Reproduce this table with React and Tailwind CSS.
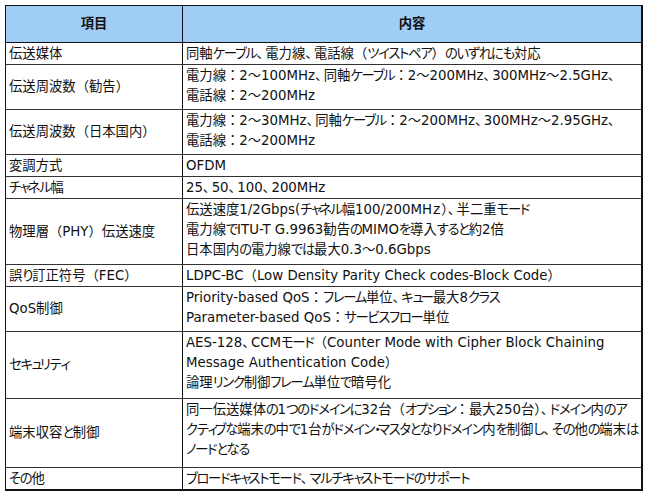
const rows = [
  { label: '伝送媒体', h: 'h-[21px]', lines: ['同軸ケーブル、電力線、電話線（ツイストペア）のいずれにも対応'] },
  { label: '伝送周波数（勧告）', h: 'h-[45px]', lines: ['電力線：2～100MHz、同軸ケーブル：2～200MHz、300MHz～2.5GHz、', '電話線：2～200MHz'] },
  { label: '伝送周波数（日本国内）', h: 'h-[45px]', lines: ['電力線：2～30MHz、同軸ケーブル：2～200MHz、300MHz～2.95GHz、', '電話線：2～200MHz'] },
  { label: '変調方式', h: 'h-[22px]', lines: ['OFDM'] },
  { label: 'チャネル幅', h: 'h-[22px]', lines: ['25、50、100、200MHz'] },
  { label: '物理層（PHY）伝送速度', h: 'h-[66px]', lines: ['伝送速度1/2Gbps(チャネル幅100/200MHｚ）、半二重モード', '電力線でITU-T G.9963勧告のMIMOを導入すると約2倍', '日本国内の電力線では最大0.3～0.6Gbps'] },
  { label: '誤り訂正符号（FEC）', h: 'h-[22px]', lines: ['LDPC-BC（Low Density Parity Check codes-Block Code）'] },
  { label: 'QoS制御', h: 'h-[45px]', lines: ['Priority-based QoS：フレーム単位、キュー最大8クラス', 'Parameter-based QoS：サービスフロー単位'] },
  { label: 'セキュリティ', h: 'h-[67px]', lines: ['AES-128、CCMモード（Counter Mode with Cipher Block Chaining', 'Message Authentication Code）', '論理リンク制御フレーム単位で暗号化'] },
  { label: '端末収容と制御', h: 'h-[69px]', lines: ['同一伝送媒体の1つのドメインに32台（オプション：最大250台）、ドメイン内のア', 'クティブな端末の中で1台がドメイン・マスタとなりドメイン内を制御し、その他の端末は', 'ノードとなる'] },
  { label: 'その他', h: 'h-[21px]', lines: ['ブロードキャストモード、マルチキャストモードのサポート'] },
];

// split into runs so kana / punctuation can get Meiryo UI–like widths
const runCls = {
  k: 'tracking-[-1.25px]',
  s: 'tracking-[-3px]',
  p: '[font-feature-settings:normal]',
  c: 'tracking-[2px]',
  n: '',
};

const kindOf = (ch) => {
  if (/[ぁぃぅぇぉっゃゅょァィゥェォッャュョ・]/.test(ch)) return 's';
  if (/[\u3041-\u30ff]/.test(ch)) return 'k';
  if (/[（）：]/.test(ch)) return 'p';
  if (ch === '、') return 'c';
  return 'n';
};

function Txt({ s }) {
  const out = [];
  let cur = '';
  let type = null;
  for (const ch of s) {
    const t = kindOf(ch);
    if (t !== type && cur) {
      out.push([type, cur]);
      cur = '';
    }
    type = t;
    cur += ch;
  }
  if (cur) out.push([type, cur]);
  return out.map(([t, c], i) => (
    <span key={i} className={runCls[t]}>
      {c}
    </span>
  ));
}

export default function App() {
  return (
    <div className="w-[650px] h-[494px] bg-white pl-[5px] pt-[5px] font-['DejaVu_Sans','Noto_Sans_CJK_JP',sans-serif] text-[13.33px] text-[#111] [font-feature-settings:'palt']">
      <table className="w-[638px] border-collapse border-l border-t border-r-2 border-b-2 border-[#111] table-fixed">
        <colgroup>
          <col className="w-[177px]" />
          <col />
        </colgroup>
        <thead>
          <tr className="h-[37px] bg-[#9fcdf6]">
            <th className="border-b border-r border-[#111] text-center font-bold text-[13.33px]">項目</th>
            <th className="border-b border-[#111] text-center font-bold text-[13.33px]">内容</th>
          </tr>
        </thead>
        <tbody>
          {rows.map((r, i) => (
            <tr key={i} className={r.h}>
              <td className={`border-r border-[#111] pl-[3px] align-middle leading-[20px] whitespace-nowrap ${i < rows.length - 1 ? 'border-b border-b-[#333]' : ''}`}>
                <Txt s={r.label} />
              </td>
              <td className={`pl-[3px] pt-[1px] align-top leading-[20px] whitespace-nowrap overflow-hidden ${i < rows.length - 1 ? 'border-b border-b-[#333]' : ''}`}>
                {r.lines.map((l, j) => (
                  <div key={j}>
                    <Txt s={l} />
                  </div>
                ))}
              </td>
            </tr>
          ))}
        </tbody>
      </table>
    </div>
  );
}
